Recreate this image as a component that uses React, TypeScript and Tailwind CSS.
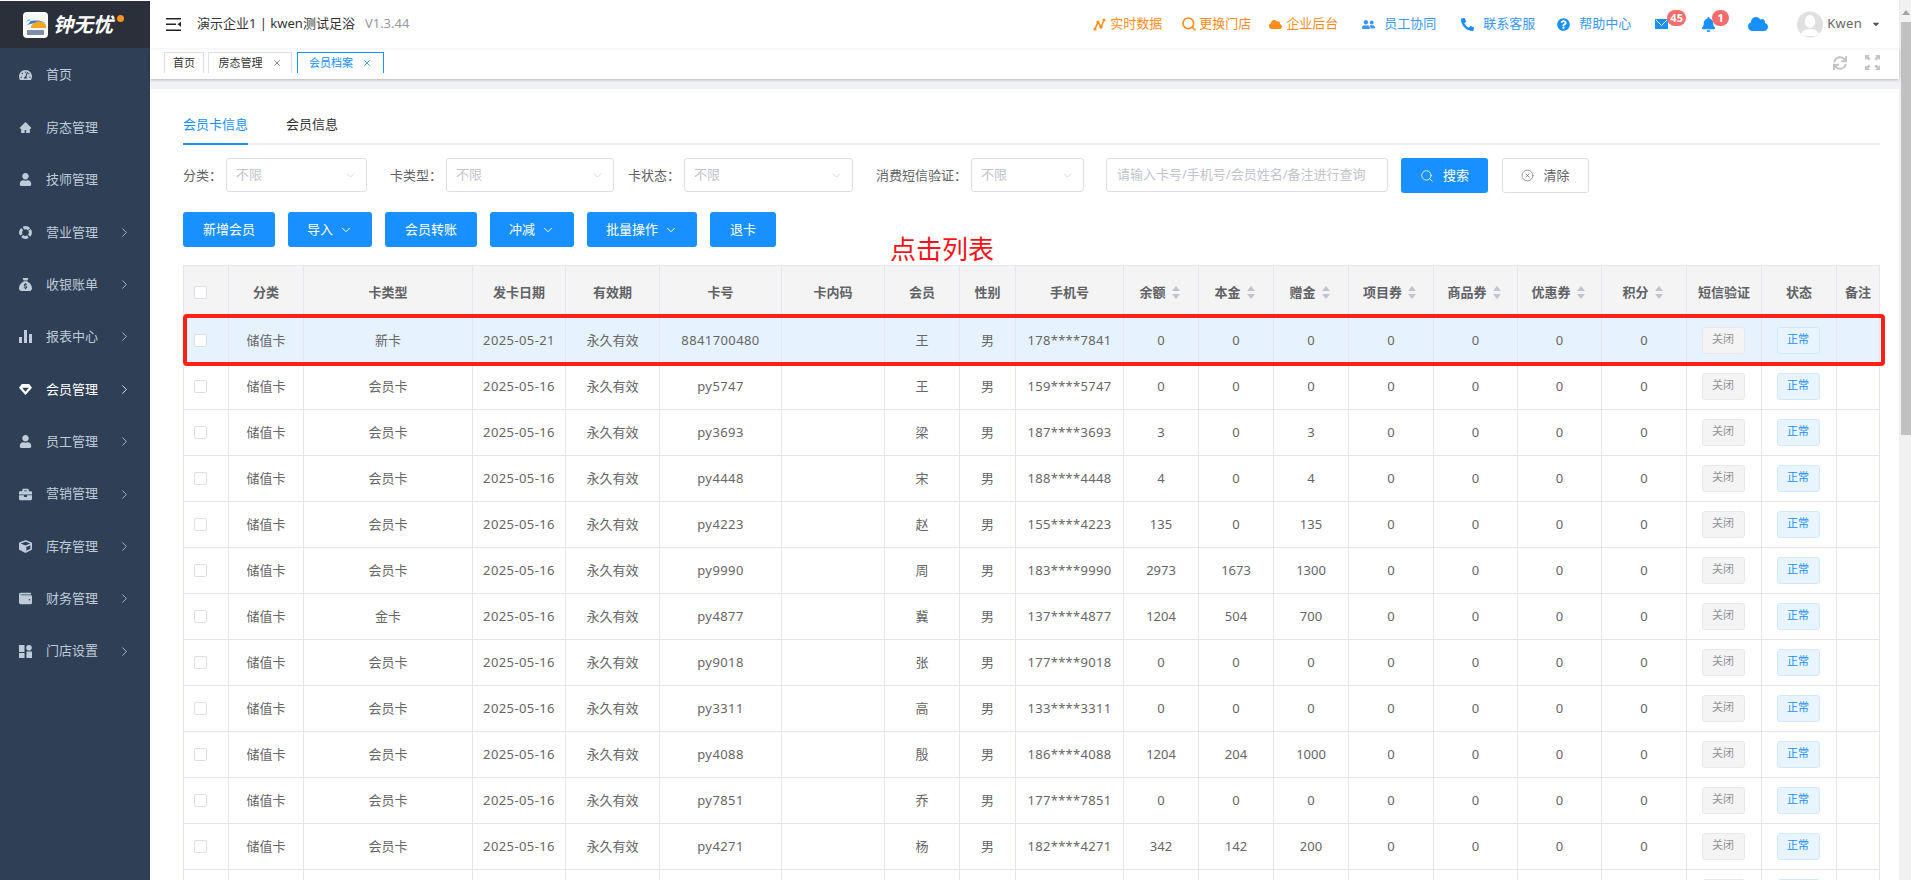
import { ChevronDown, ChevronRight, CircleX, Search, X } from "lucide-react";
import type { ReactNode } from "react";
import { AiFillHome } from "react-icons/ai";
import {
	FaBell,
	FaBriefcase,
	FaCaretDown,
	FaCloud,
	FaCube,
	FaPhoneAlt,
	FaQuestionCircle,
	FaSync,
	FaTachometerAlt,
	FaUser,
	FaUserFriends,
	FaWallet,
} from "react-icons/fa";
import { FaSackDollar } from "react-icons/fa6";

function BarsIcon() {
	return (
		<svg width="13" height="13" viewBox="0 0 13 13" fill="currentColor">
			<rect x="0" y="7" width="3" height="6" />
			<rect x="5" y="0" width="3" height="13" />
			<rect x="10" y="4" width="3" height="9" />
		</svg>
	);
}

function RingIcon() {
	return (
		<svg width="13" height="13" viewBox="0 0 13 13" fill="none" stroke="currentColor" strokeWidth="3">
			<circle cx="6.5" cy="6.5" r="4.8" strokeDasharray="6 1.54" transform="rotate(-33 6.5 6.5)" />
		</svg>
	);
}

function GemIcon() {
	return (
		<svg width="14" height="13" viewBox="0 0 14 13" fill="currentColor">
			<path fillRule="evenodd" d="M3 0.5H11L14 4.5L7 12.5L0 4.5ZM3.5 4.5H10.5L7 8.8Z" />
		</svg>
	);
}

function AppsIcon() {
	return (
		<svg width="13" height="13" viewBox="0 0 13 13" fill="currentColor">
			<rect x="0" y="0" width="5.5" height="7" />
			<circle cx="10" cy="2.8" r="2.8" />
			<rect x="0" y="8" width="5.5" height="5" />
			<rect x="7.5" y="6.5" width="5.5" height="6.5" />
		</svg>
	);
}

function MenuFoldIcon() {
	return (
		<svg width="15" height="13" viewBox="0 0 15 13" fill="#222">
			<rect x="0" y="0" width="15" height="1.5" />
			<rect x="0" y="5.5" width="10" height="1.5" />
			<path d="M15 3.8V8.7L11.4 6.2Z" />
			<rect x="0" y="11.5" width="15" height="1.5" />
		</svg>
	);
}

function LogoMark() {
	return (
		<svg width="25" height="26" viewBox="0 0 25 26">
			<rect x="0" y="0" width="25" height="26" rx="4" fill="#fff" />
			<rect x="2" y="2" width="21" height="15" fill="#f3f6fb" />
			<path d="M3 10C8 7 9 9 4 13C11 11 16 9 22 11C16 7 10 9 7 9C7 7 6 7 3 10Z" fill="#2f7fd9" />
			<path d="M8 14C13 8 18 8 23 13L23 16L8 16Z" fill="#f5a623" />
			<rect x="4" y="18" width="17" height="5" fill="#7f8fa8" />
		</svg>
	);
}

function ChartDotsIcon() {
	return (
		<svg width="13" height="13" viewBox="0 0 13 13" fill="none" stroke="currentColor" strokeWidth="1.5">
			<path d="M2 11L5 4L8 9L11 2" />
			<circle cx="2" cy="11" r="1.6" fill="currentColor" stroke="none" />
			<circle cx="5" cy="4" r="1.6" fill="currentColor" stroke="none" />
			<circle cx="8" cy="9" r="1.6" fill="currentColor" stroke="none" />
			<circle cx="11" cy="2" r="1.6" fill="currentColor" stroke="none" />
		</svg>
	);
}

function MailIcon() {
	return (
		<svg width="13" height="10" viewBox="0 0 13 10">
			<rect x="0" y="0" width="13" height="10" fill="#1890ff" />
			<path d="M1 1L6.5 6.5L12 1" fill="none" stroke="#fff" strokeWidth="1" />
		</svg>
	);
}

function ExpandIcon() {
	return (
		<svg width="15" height="15" viewBox="0 0 15 15" fill="#c4c4c4">
			<path d="M0 0H5L3.4 1.6L5.5 3.7L3.7 5.5L1.6 3.4L0 5Z" />
			<path d="M15 0V5L13.4 3.4L11.3 5.5L9.5 3.7L11.6 1.6L10 0Z" />
			<path d="M0 15V10L1.6 11.6L3.7 9.5L5.5 11.3L3.4 13.4L5 15Z" />
			<path d="M15 15H10L11.6 13.4L9.5 11.3L11.3 9.5L13.4 11.6L15 10Z" />
		</svg>
	);
}

function AvatarIcon() {
	return (
		<svg width="26" height="27" viewBox="0 0 26 27">
			<circle cx="13" cy="13.5" r="13" fill="#e0e0e0" />
			<ellipse cx="13" cy="10.5" rx="5.2" ry="6.5" fill="#fff" />
			<path d="M4 23C6 18.5 10 18 13 18C16 18 20 18.5 22 23C19 26 7 26 4 23Z" fill="#fff" />
		</svg>
	);
}

function SortCaret() {
	return (
		<svg width="8" height="13" viewBox="0 0 8 13" fill="#c0c4cc">
			<path d="M4 0L8 5H0Z" />
			<path d="M4 13L0 8H8Z" />
		</svg>
	);
}

const menus: { label: string; icon: ReactNode; arrow?: boolean; active?: boolean }[] = [
	{ label: "首页", icon: <FaTachometerAlt size={14} /> },
	{ label: "房态管理", icon: <AiFillHome size={17} /> },
	{ label: "技师管理", icon: <FaUser size={13} /> },
	{ label: "营业管理", icon: <RingIcon />, arrow: true },
	{ label: "收银账单", icon: <FaSackDollar size={13} />, arrow: true },
	{ label: "报表中心", icon: <BarsIcon />, arrow: true },
	{ label: "会员管理", icon: <GemIcon />, arrow: true, active: true },
	{ label: "员工管理", icon: <FaUser size={13} />, arrow: true },
	{ label: "营销管理", icon: <FaBriefcase size={13} />, arrow: true },
	{ label: "库存管理", icon: <FaCube size={13} />, arrow: true },
	{ label: "财务管理", icon: <FaWallet size={13} />, arrow: true },
	{ label: "门店设置", icon: <AppsIcon />, arrow: true },
];

const columns: { title: string; width: string; sort?: boolean }[] = [
	{ title: "", width: "w-[45px]" },
	{ title: "分类", width: "w-[75px]" },
	{ title: "卡类型", width: "w-[169px]" },
	{ title: "发卡日期", width: "w-[93px]" },
	{ title: "有效期", width: "w-[94px]" },
	{ title: "卡号", width: "w-[122px]" },
	{ title: "卡内码", width: "w-[103px]" },
	{ title: "会员", width: "w-[75px]" },
	{ title: "性别", width: "w-[56px]" },
	{ title: "手机号", width: "w-[108px]" },
	{ title: "余额", width: "w-[75px]", sort: true },
	{ title: "本金", width: "w-[75px]", sort: true },
	{ title: "赠金", width: "w-[75px]", sort: true },
	{ title: "项目券", width: "w-[85px]", sort: true },
	{ title: "商品券", width: "w-[84px]", sort: true },
	{ title: "优惠券", width: "w-[84px]", sort: true },
	{ title: "积分", width: "w-[85px]", sort: true },
	{ title: "短信验证", width: "w-[75px]" },
	{ title: "状态", width: "w-[75px]" },
	{ title: "备注", width: "w-[43px]" },
];

type Row = [string, string, string, string, string, string, string, string, string];

const rows: Row[] = [
	["新卡", "2025-05-21", "8841700480", "王", "178****7841", "0", "0", "0", "0"],
	["会员卡", "2025-05-16", "py5747", "王", "159****5747", "0", "0", "0", "0"],
	["会员卡", "2025-05-16", "py3693", "梁", "187****3693", "3", "0", "3", "0"],
	["会员卡", "2025-05-16", "py4448", "宋", "188****4448", "4", "0", "4", "0"],
	["会员卡", "2025-05-16", "py4223", "赵", "155****4223", "135", "0", "135", "0"],
	["会员卡", "2025-05-16", "py9990", "周", "183****9990", "2973", "1673", "1300", "0"],
	["金卡", "2025-05-16", "py4877", "冀", "137****4877", "1204", "504", "700", "0"],
	["会员卡", "2025-05-16", "py9018", "张", "177****9018", "0", "0", "0", "0"],
	["会员卡", "2025-05-16", "py3311", "高", "133****3311", "0", "0", "0", "0"],
	["会员卡", "2025-05-16", "py4088", "殷", "186****4088", "1204", "204", "1000", "0"],
	["会员卡", "2025-05-16", "py7851", "乔", "177****7851", "0", "0", "0", "0"],
	["会员卡", "2025-05-16", "py4271", "杨", "182****4271", "342", "142", "200", "0"],
];

function Sidebar() {
	return (
		<aside className="w-[150px] shrink-0 bg-[#2f4056] flex flex-col">
			<div className="h-[1px] bg-white" />
			<div className="h-[47px] bg-[#2b2f3a] flex items-center pl-[23px] relative">
				<LogoMark />
				<span className="ml-[5px] text-white text-[20px] leading-none font-bold italic">钟无忧</span>
				<span className="absolute left-[117px] top-[14px] w-[7px] h-[7px] rounded-full bg-[#f7931e]" />
			</div>
			<nav className="pt-[1px]">
				{menus.map((m) => (
					<div
						key={m.label}
						className={`h-[52.36px] flex items-center text-[13px] ${m.active ? "text-white" : "text-[#bfcbd9]"}`}
					>
						<span className="w-[19px] shrink-0" />
						<span className="w-[13px] shrink-0 flex items-center justify-center">{m.icon}</span>
						<span className="ml-[14px] w-[53px] whitespace-nowrap">{m.label}</span>
						{m.arrow && <ChevronRight size={15} strokeWidth={1.3} className="ml-[18px]" />}
					</div>
				))}
			</nav>
		</aside>
	);
}

function HeaderLink({ icon, label, className }: { icon: ReactNode; label: string; className: string }) {
	return (
		<div className={`flex items-center ${className}`}>
			{icon}
			<span className="whitespace-nowrap">{label}</span>
		</div>
	);
}

function Header() {
	return (
		<header className="h-[48px] shrink-0 flex items-center pl-[16px] bg-white relative z-10 shadow-[0_1px_3px_rgba(0,0,0,0.06)] text-[13px]">
			<MenuFoldIcon />
			<span className="ml-[16px] text-[#333] whitespace-nowrap">演示企业1 | kwen测试足浴</span>
			<span className="ml-[10px] text-[#999]">V1.3.44</span>
			<div className="ml-auto flex items-center pr-[18px]">
				<HeaderLink className="text-[#ff8c1a] gap-[4px] w-[88px]" icon={<ChartDotsIcon />} label="实时数据" />
				<HeaderLink className="text-[#ff8c1a] gap-[2px] w-[88px]" icon={<Search size={16} strokeWidth={2.4} />} label="更换门店" />
				<HeaderLink className="text-[#ff8c1a] gap-[4px] w-[93px]" icon={<FaCloud size={13} />} label="企业后台" />
				<HeaderLink className="text-[#3a97f5] gap-[9px] w-[99px]" icon={<FaUserFriends size={13} />} label="员工协同" />
				<HeaderLink className="text-[#3a97f5] gap-[9px] w-[96px]" icon={<FaPhoneAlt size={13} className="text-[#1890ff]" />} label="联系客服" />
				<HeaderLink className="text-[#3a97f5] gap-[9px] w-[98px]" icon={<FaQuestionCircle size={13} className="text-[#1890ff]" />} label="帮助中心" />
				<div className="relative w-[46px] h-[16px] flex items-center">
					<MailIcon />
					<span className="absolute left-[12px] -top-[6px] w-[19px] h-[16px] rounded-full bg-[#f56c6c] text-white text-[11px] font-bold leading-[16px] text-center">45</span>
				</div>
				<div className="relative w-[47px] h-[16px] flex items-center text-[#1890ff]">
					<FaBell size={15} />
					<span className="absolute left-[11px] -top-[6px] w-[17px] h-[16px] rounded-full bg-[#f56c6c] text-white text-[11px] font-bold leading-[16px] text-center">1</span>
				</div>
				<FaCloud size={20} className="text-[#1890ff]" />
				<span className="ml-[29px]"><AvatarIcon /></span>
				<span className="ml-[4px] text-[#666] tracking-[0.3px]">Kwen</span>
				<FaCaretDown size={10} className="ml-[9px] text-[#555]" />
			</div>
		</header>
	);
}

function TabStrip() {
	return (
		<div className="h-[31px] shrink-0 bg-white flex items-start pt-[4px] pl-[14px] relative shadow-[0_1px_3px_rgba(0,0,0,0.25)] text-[11px]">
			<div className="h-[21px] w-[40px] border border-b-0 border-[#dcdfe6] text-[#333] flex items-center justify-center">首页</div>
			<div className="ml-[4px] h-[21px] w-[84px] border border-b-0 border-[#dcdfe6] text-[#333] flex items-center justify-center gap-[9px]">
				房态管理
				<X size={10} className="text-[#777]" />
			</div>
			<div className="ml-[5px] h-[21px] w-[87px] border border-b-0 border-[#1890ff] text-[#1890ff] flex items-center justify-center gap-[9px]">
				会员档案
				<X size={10} />
			</div>
			<div className="ml-auto flex items-center gap-[18px] pr-[19px] pt-[3px] text-[#c4c4c4]">
				<FaSync size={14} />
				<ExpandIcon />
			</div>
		</div>
	);
}

function FilterSelect({ width }: { width: string }) {
	return (
		<div className={`${width} h-[34px] shrink-0 border border-[#dcdfe6] rounded-[3px] flex items-center justify-between pl-[9px] pr-[9px] text-[#c0c4cc]`}>
			不限
			<ChevronDown size={13} strokeWidth={1.2} />
		</div>
	);
}

function Filters() {
	return (
		<div className="mt-[13px] flex items-start text-[13px] text-[#606266] h-[35px]">
			<span className="w-[43px] h-[34px] leading-[34px] whitespace-nowrap">分类：</span>
			<FilterSelect width="w-[141px]" />
			<span className="ml-[23px] w-[56px] h-[34px] leading-[34px] whitespace-nowrap">卡类型：</span>
			<FilterSelect width="w-[168px]" />
			<span className="ml-[14px] w-[56px] h-[34px] leading-[34px] whitespace-nowrap">卡状态：</span>
			<FilterSelect width="w-[169px]" />
			<span className="ml-[23px] w-[95px] h-[34px] leading-[34px] whitespace-nowrap">消费短信验证：</span>
			<FilterSelect width="w-[113px]" />
			<div className="ml-[22px] w-[282px] h-[34px] border border-[#dcdfe6] rounded-[3px] flex items-center pl-[10px] text-[#c0c4cc] whitespace-nowrap">
				请输入卡号/手机号/会员姓名/备注进行查询
			</div>
			<button className="ml-[13px] w-[87px] h-[35px] bg-[#1890ff] rounded-[3px] text-white flex items-center justify-center gap-[9px]">
				<Search size={14} strokeWidth={1.4} />
				搜索
			</button>
			<button className="ml-[14px] w-[87px] h-[35px] border border-[#dcdfe6] rounded-[3px] text-[#606266] flex items-center justify-center gap-[9px]">
				<CircleX size={13} strokeWidth={1.2} />
				清除
			</button>
		</div>
	);
}

function ActionButton({ width, label, menu }: { width: string; label: string; menu?: boolean }) {
	return (
		<button className={`${width} h-[35px] bg-[#1890ff] rounded-[3px] text-white text-[13px] flex items-center justify-center gap-[6px]`}>
			{label}
			{menu && <ChevronDown size={14} strokeWidth={1.7} />}
		</button>
	);
}

function Checkbox() {
	return <span className="block ml-[10px] w-[13px] h-[13px] bg-white border border-[#dcdfe6] rounded-[2px]" />;
}

function MemberTable() {
	const cell = "border border-[#e3e8ee] text-center p-0";
	return (
		<div className="relative mt-[18px] w-[1697px]">
			<table className="table-fixed border-collapse w-[1697px] text-[13px] text-[#666]">
				<colgroup>
					{columns.map((c, i) => (
						<col key={i} className={c.width} />
					))}
				</colgroup>
				<thead>
					<tr className="h-[52px] bg-[#f4f4f4] text-[#606266]">
						{columns.map((c, i) => (
							<th key={i} className={`${cell} font-semibold !pt-[2px]`}>
								{i === 0 && <Checkbox />}
								{c.sort ? (
									<span className="inline-flex items-center justify-center gap-[6px] pr-[3px] -mt-[8px]">
										{c.title}
										<SortCaret />
									</span>
								) : (
									c.title
								)}
							</th>
						))}
					</tr>
				</thead>
				<tbody>
					{[...rows, null].map((r, i) => (
						<tr key={i} className={`h-[46px] ${i === 0 ? "bg-[#e6f3fe]" : "bg-white"}`}>
							<td className={cell}>
								<Checkbox />
							</td>
							<td className={cell}>{r && "储值卡"}</td>
							<td className={cell}>{r && r[0]}</td>
							<td className={`${cell} tracking-[0.4px]`}>{r && r[1]}</td>
							<td className={cell}>{r && "永久有效"}</td>
							<td className={`${cell} tracking-[0.4px]`}>{r && r[2]}</td>
							<td className={cell} />
							<td className={cell}>{r && r[3]}</td>
							<td className={cell}>{r && "男"}</td>
							<td className={`${cell} tracking-[0.3px]`}>{r && r[4]}</td>
							<td className={cell}>{r && r[5]}</td>
							<td className={cell}>{r && r[6]}</td>
							<td className={cell}>{r && r[7]}</td>
							<td className={cell}>{r && r[8]}</td>
							<td className={cell}>{r && "0"}</td>
							<td className={cell}>{r && "0"}</td>
							<td className={cell}>{r && "0"}</td>
							<td className={cell}>
								<span className="inline-flex w-[43px] h-[27px] items-center justify-center pb-[2px] pr-[1px] -ml-[1px] bg-[#f4f4f5] border border-[#e9e9eb] rounded-[3px] text-[11px] text-[#909399] align-middle">
									{r && "关闭"}
								</span>
							</td>
							<td className={cell}>
								<span className="inline-flex w-[43px] h-[27px] items-center justify-center pb-[2px] pr-[1px] -ml-[1px] bg-[#e8f4ff] border border-[#d1e9ff] rounded-[3px] text-[11px] text-[#1890ff] align-middle">
									{r && "正常"}
								</span>
							</td>
							<td className={cell} />
						</tr>
					))}
				</tbody>
			</table>
			<div className="absolute left-0 top-[49px] w-[1702px] h-[52px] border-4 border-[#ff2015] rounded-[4px]" />
			<span className="absolute left-[707px] -top-[31px] text-[26px] leading-[30px] text-[#f5141a] whitespace-nowrap">点击列表</span>
		</div>
	);
}

export default function App() {
	return (
		<div className="w-[1911px] h-[880px] overflow-hidden flex bg-white font-['Noto_Sans','Noto_Sans_CJK_SC',sans-serif]">
			<Sidebar />
			<div className="flex-1 min-w-0 flex flex-col">
				<Header />
				<TabStrip />
				<div className="h-[10px] shrink-0 bg-[#f0f2f5]" />
				<main className="flex-1 min-h-0 pl-[33px] bg-white overflow-hidden">
					<div className="w-[1697px] h-[56px] border-b-2 border-[#eeeeee] flex items-end text-[13px]">
						<div className="w-[65px] h-[38px] -mb-[2px] border-b-2 border-[#1890ff] text-[#1890ff] whitespace-nowrap flex items-center">会员卡信息</div>
						<div className="ml-[38px] h-[38px] -mb-[2px] pb-[2px] text-[#303133] whitespace-nowrap flex items-center">会员信息</div>
					</div>
					<Filters />
					<div className="mt-[19px] flex gap-[13px]">
						<ActionButton width="w-[92px]" label="新增会员" />
						<ActionButton width="w-[84px]" label="导入" menu />
						<ActionButton width="w-[92px]" label="会员转账" />
						<ActionButton width="w-[84px]" label="冲减" menu />
						<ActionButton width="w-[110px]" label="批量操作" menu />
						<ActionButton width="w-[66px]" label="退卡" />
					</div>
					<MemberTable />
				</main>
			</div>
			<div className="w-[12px] shrink-0 bg-[#f1f1f1] flex flex-col items-end">
				<div className="h-[22px] w-[10px] flex items-center justify-center">
					<span className="w-0 h-0 border-x-[4px] border-x-transparent border-b-[5px] border-b-[#a3a3a3] mt-[2px]" />
				</div>
				<div className="w-[10px] h-[413px] bg-[#c1c1c1]" />
			</div>
		</div>
	);
}
